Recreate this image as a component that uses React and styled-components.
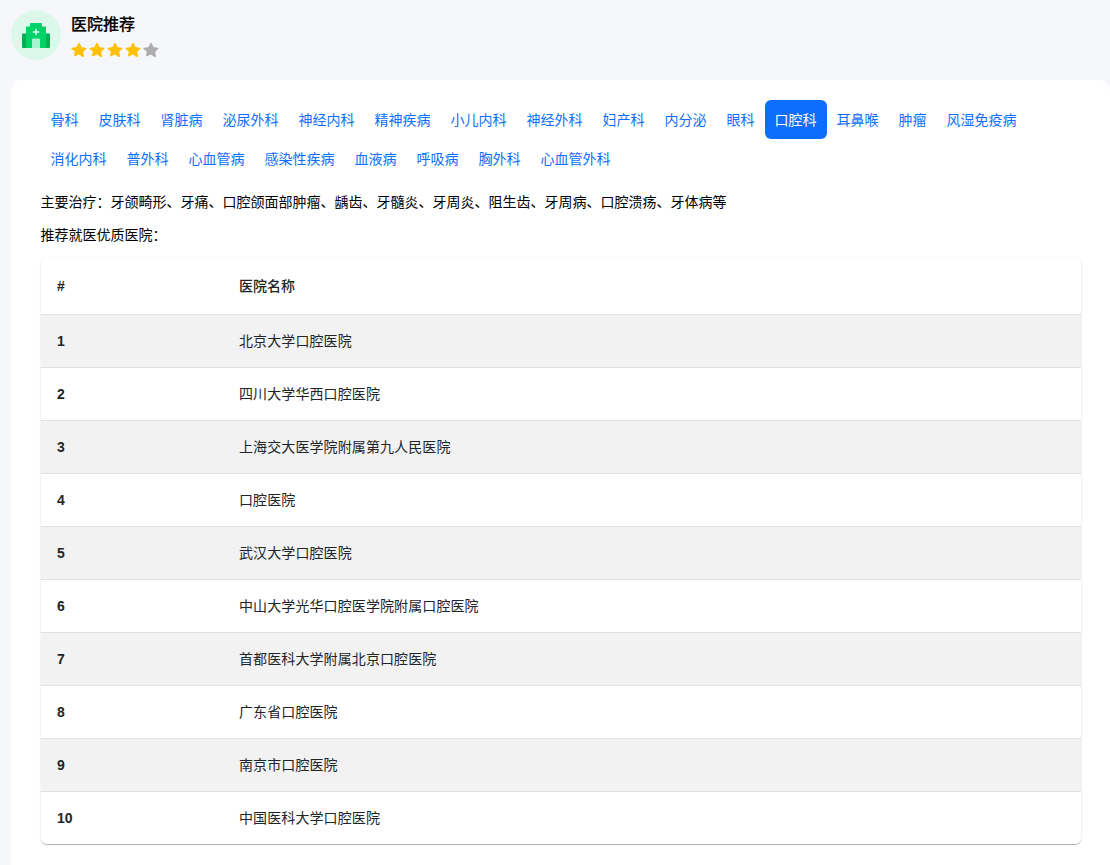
import React from 'react';
import styled, { createGlobalStyle } from 'styled-components';

const Global = createGlobalStyle`
  html, body { margin: 0; padding: 0; background: #f5f7fb; }
  body { font-family: "Liberation Sans", "Noto Sans CJK SC", sans-serif; font-size: 14px; color: #000; }
  * { box-sizing: border-box; }
`;
const Page = styled.div`padding: 10px 0 0 11px; min-height: 865px; overflow: hidden;`;
const Header = styled.header`display: flex; gap: 10px; height: 70px;`;
const Avatar = styled.div`width: 50px; height: 50px; border-radius: 50%; background: #dcf8ea; display: flex; align-items: center; justify-content: center;`;
const HeadText = styled.div`display: flex; flex-direction: column;`;
const Title = styled.div`font-size: 16px; line-height: 30px; font-weight: 500; -webkit-text-stroke: 0.2px #000;`;
const Stars = styled.div`display: flex; gap: 2px; margin-top: 2px;`;
const Card = styled.main`background: #fff; border-radius: 10px 10px 0 0; padding: 20px 29px 21px 30px; height: 785px;`;
const Tabs = styled.nav`display: flex; flex-wrap: wrap; margin-bottom: 14px;`;
const Tab = styled.a`height: 39px; line-height: 40px; padding: 0 10.5px 0 9.5px; border-radius: 6px; color: ${p => p.$active ? '#fff' : '#0d6efd'}; background: ${p => p.$active ? '#0d6efd' : 'transparent'};`;
const Para = styled.p`margin: 0 0 13px -0.5px; line-height: 20px;`;
const TableWrap = styled.div`border-radius: 6px; box-shadow: 0 1px 1px rgba(0,0,0,.3), 0 0 3px rgba(0,0,0,.06); overflow: hidden;`;
const Table = styled.table`width: 100%; border-collapse: collapse; table-layout: fixed; color: #212529; font-size: 14px;`;
const NumCol = styled.col`width: 182px;`;
const Th = styled.th`height: 56px; padding: 0 16px ${p => p.$name ? '2px' : '0'}; text-align: left; font-weight: ${p => p.$name ? 500 : 700}; border-bottom: 1px solid #dee2e6;`;
const Row = styled.tr`background: ${p => p.$odd ? '#f2f2f2' : '#fff'}; border-bottom: 1px solid #dee2e6; &:last-child { border-bottom: 0; }`;
const NumCell = styled.th`height: 53px; padding: 0 16px; text-align: left; font-weight: 700;`;
const Cell = styled.td`height: 53px; padding: 0 16px 2px; letter-spacing: 0.1px;`;

const tabs = ['骨科','皮肤科','肾脏病','泌尿外科','神经内科','精神疾病','小儿内科','神经外科','妇产科','内分泌','眼科','口腔科','耳鼻喉','肿瘤','风湿免疫病','消化内科','普外科','心血管病','感染性疾病','血液病','呼吸病','胸外科','心血管外科'];
const rows = ['北京大学口腔医院','四川大学华西口腔医院','上海交大医学院附属第九人民医院','口腔医院','武汉大学口腔医院','中山大学光华口腔医学院附属口腔医院','首都医科大学附属北京口腔医院','广东省口腔医院','南京市口腔医院','中国医科大学口腔医院'];

const Star = ({ color }) => (
  <svg width="16" height="16" viewBox="0 0 24 24"><path fill={color} stroke={color} strokeWidth="2.5" strokeLinejoin="round" d="M12 2.5l3 6.3 7 .9-5.1 4.8 1.3 6.9L12 17.2l-6.2 3.2 1.3-6.9L2 9.7l7-.9z" /></svg>
);
const Hospital = () => (
  <svg width="28" height="25" viewBox="0 0 28 25">
    <path fill="#00b050" d="M0 11.5a1 1 0 0 1 1-1h26a1 1 0 0 1 1 1V24a1 1 0 0 1-1 1H1a1 1 0 0 1-1-1z" />
    <path fill="#00d26a" d="M4 4.5a1 1 0 0 1 1-1h3V1a1 1 0 0 1 1-1h10a1 1 0 0 1 1 1v2.5h3a1 1 0 0 1 1 1V25H4z" />
    <path fill="#a5f5cf" d="M10 25v-8.5a1 1 0 0 1 1-1h6a1 1 0 0 1 1 1V25z" />
    <path fill="#dffbed" d="M13.3 5.800h1.400v2.500h2.500v1.400h-2.500v2.500h-1.400V9.700h-2.500V8.300h2.500z" />
  </svg>
);

export default function App() {
  return (
    <Page>
      <Global />
      <Header>
        <Avatar><Hospital /></Avatar>
        <HeadText>
          <Title>医院推荐</Title>
          <Stars>{[0,1,2,3,4].map(i => <Star key={i} color={i < 4 ? '#ffc107' : '#adadad'} />)}</Stars>
        </HeadText>
      </Header>
      <Card>
        <Tabs>{tabs.map(t => <Tab key={t} $active={t === '口腔科'}>{t}</Tab>)}</Tabs>
        <Para>主要治疗：牙颌畸形、牙痛、口腔颌面部肿瘤、龋齿、牙髓炎、牙周炎、阻生齿、牙周病、口腔溃疡、牙体病等</Para>
        <Para>推荐就医优质医院：</Para>
        <TableWrap>
          <Table>
            <colgroup><NumCol /><col /></colgroup>
            <thead><tr><Th>#</Th><Th $name>医院名称</Th></tr></thead>
            <tbody>{rows.map((r, i) => (
              <Row key={r} $odd={i % 2 === 0}><NumCell>{i + 1}</NumCell><Cell>{r}</Cell></Row>
            ))}</tbody>
          </Table>
        </TableWrap>
      </Card>
    </Page>
  );
}
